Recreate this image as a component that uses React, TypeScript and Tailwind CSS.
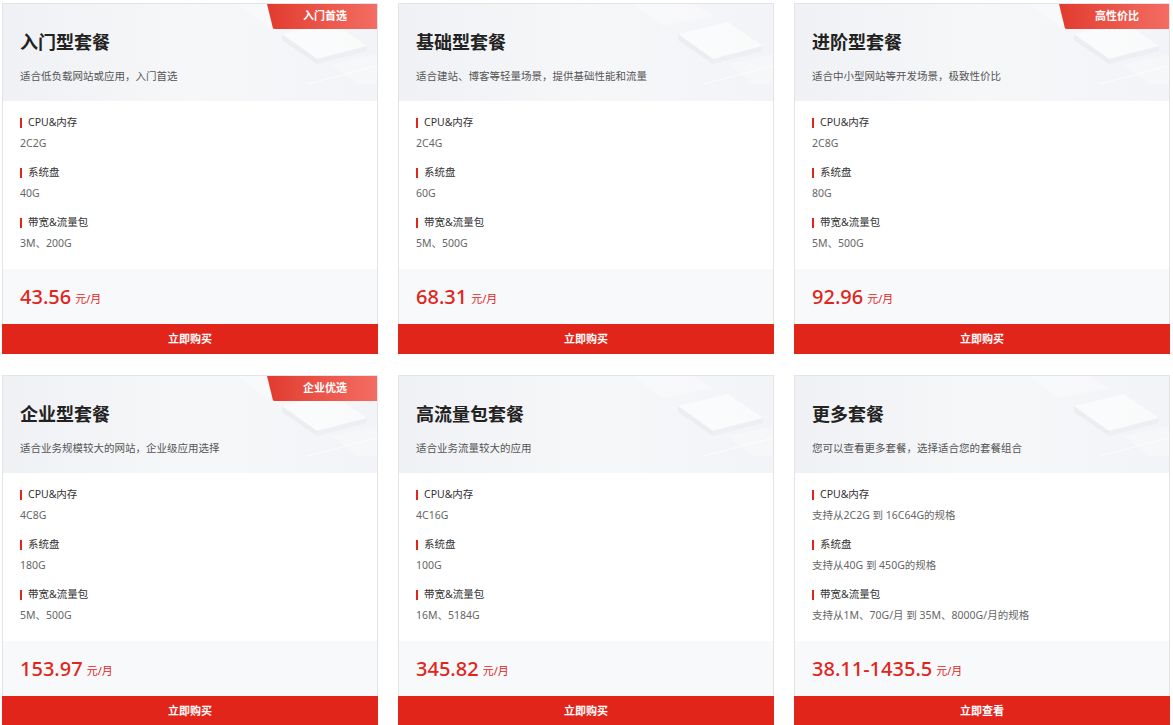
import React from "react";

type Spec = { label: string; value: string };
type Plan = {
  title: string;
  desc: string;
  badge?: string;
  specs: Spec[];
  price: string;
  button: string;
};

const plans: Plan[] = [
  {
    title: "入门型套餐",
    desc: "适合低负载网站或应用，入门首选",
    badge: "入门首选",
    specs: [
      { label: "CPU&内存", value: "2C2G" },
      { label: "系统盘", value: "40G" },
      { label: "带宽&流量包", value: "3M、200G" },
    ],
    price: "43.56",
    button: "立即购买",
  },
  {
    title: "基础型套餐",
    desc: "适合建站、博客等轻量场景，提供基础性能和流量",
    specs: [
      { label: "CPU&内存", value: "2C4G" },
      { label: "系统盘", value: "60G" },
      { label: "带宽&流量包", value: "5M、500G" },
    ],
    price: "68.31",
    button: "立即购买",
  },
  {
    title: "进阶型套餐",
    desc: "适合中小型网站等开发场景，极致性价比",
    badge: "高性价比",
    specs: [
      { label: "CPU&内存", value: "2C8G" },
      { label: "系统盘", value: "80G" },
      { label: "带宽&流量包", value: "5M、500G" },
    ],
    price: "92.96",
    button: "立即购买",
  },
  {
    title: "企业型套餐",
    desc: "适合业务规模较大的网站，企业级应用选择",
    badge: "企业优选",
    specs: [
      { label: "CPU&内存", value: "4C8G" },
      { label: "系统盘", value: "180G" },
      { label: "带宽&流量包", value: "5M、500G" },
    ],
    price: "153.97",
    button: "立即购买",
  },
  {
    title: "高流量包套餐",
    desc: "适合业务流量较大的应用",
    specs: [
      { label: "CPU&内存", value: "4C16G" },
      { label: "系统盘", value: "100G" },
      { label: "带宽&流量包", value: "16M、5184G" },
    ],
    price: "345.82",
    button: "立即购买",
  },
  {
    title: "更多套餐",
    desc: "您可以查看更多套餐，选择适合您的套餐组合",
    specs: [
      { label: "CPU&内存", value: "支持从2C2G 到 16C64G的规格" },
      { label: "系统盘", value: "支持从40G 到 450G的规格" },
      { label: "带宽&流量包", value: "支持从1M、70G/月 到 35M、8000G/月的规格" },
    ],
    price: "38.11-1435.5",
    button: "立即查看",
  },
];

function Deco() {
  return (
    <svg
      className="absolute right-0 top-0"
      width="140"
      height="97"
      viewBox="0 0 140 97"
      fill="none"
    >
      <polygon points="0,0 60,0 80,12 30,22" fill="#ffffff" opacity="0.35" />
      <polygon points="45,30 95,18 130,42 80,55" fill="#ffffff" opacity="0.55" />
      <polygon points="45,30 80,55 80,60 45,36" fill="#e4e6ea" opacity="0.5" />
      <polygon points="80,55 130,42 130,47 80,60" fill="#e8eaee" opacity="0.5" />
      <polygon points="95,60 140,50 140,80 120,80" fill="#ffffff" opacity="0.3" />
      <line x1="70" y1="80" x2="140" y2="62" stroke="#ffffff" strokeWidth="1" opacity="0.7" />
    </svg>
  );
}

function Card({ plan }: { plan: Plan }) {
  return (
    <div className="flex h-[351px] w-[376px] flex-col border border-[#e3e4e6] bg-white">
      <div className="relative h-[97px] shrink-0 overflow-hidden bg-gradient-to-r from-[#eff1f4] via-[#f6f7f9] to-[#f3f4f7] pl-[17px]">
        <Deco />
        {plan.badge && (
          <div className="absolute right-0 top-0 flex h-[25px] w-[110px] items-center justify-center rounded-bl-[6px] bg-gradient-to-r from-[#e23a2e] to-[#f36c62] pl-[6px] text-[11px] font-bold text-white [clip-path:polygon(0_0,100%_0,100%_100%,8px_100%,6px_98%)]">
            {plan.badge}
          </div>
        )}
        <div className="relative pt-[25px] text-[18px] font-bold leading-[26px] text-[#222]">
          {plan.title}
        </div>
        <div className="relative mt-[14px] text-[10.5px] leading-[14px] text-[#555]">
          {plan.desc}
        </div>
      </div>
      <div className="flex h-[168px] shrink-0 flex-col pl-[17px] pt-[14px]">
        {plan.specs.map((s, i) => (
          <div key={i} className={i > 0 ? "mt-[14px]" : ""}>
            <div className="flex h-[15px] items-center text-[10.5px] leading-[15px] text-[#333]">
              <span className="mr-[6px] inline-block h-[10px] w-[2px] bg-[#e1251b]" />
              {s.label}
            </div>
            <div className="mt-[6px] h-[15px] text-[10.5px] leading-[15px] text-[#666]">
              {s.value}
            </div>
          </div>
        ))}
      </div>
      <div className="flex h-[55px] shrink-0 items-center bg-[#f8f9fb] pl-[17px] pt-[1px]">
        <span className="text-[20px] font-medium leading-[26px] text-[#e1251b]">
          {plan.price}
        </span>
        <span className="ml-[4px] mt-[3px] text-[11px] leading-[16px] text-[#e1251b]">
          元/月
        </span>
      </div>
      <div className="-mx-px -mb-px flex h-[30px] shrink-0 items-center justify-center bg-[#e1251b] text-[11px] font-bold text-white">
        {plan.button}
      </div>
    </div>
  );
}

export default function App() {
  return (
    <div
      className="h-[725px] w-[1173px] overflow-hidden bg-white pl-[2px] pt-[3px]"
      style={{ fontFamily: '"Noto Sans", "Noto Sans CJK SC", sans-serif' }}
    >
      <div className="grid grid-cols-[376px_376px_376px] gap-x-[20px] gap-y-[21px]">
        {plans.map((p, i) => (
          <Card key={i} plan={p} />
        ))}
      </div>
    </div>
  );
}
